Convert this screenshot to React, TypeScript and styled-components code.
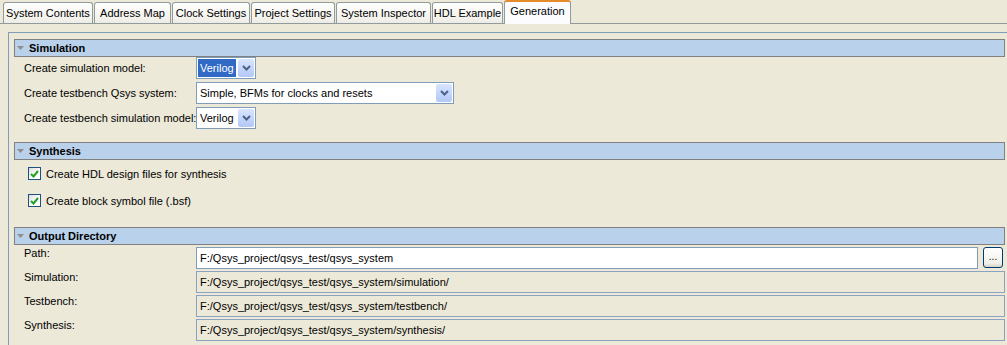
import styled, { createGlobalStyle } from "styled-components";

const GlobalStyle = createGlobalStyle`
  html, body {
    margin: 0;
    padding: 0;
    background: #ECE9D8;
  }
  body {
    font-family: "Liberation Sans", Arial, sans-serif;
    font-size: 11px;
    color: #000;
  }
`;

const Page = styled.div`
  width: 1007px;
  height: 345px;
  overflow: hidden;
  display: flex;
  flex-direction: column;
`;

const TabBar = styled.div`
  display: flex;
  align-items: flex-end;
  gap: 1px;
  height: 25px;
  box-sizing: border-box;
  padding-left: 3px;
  border-bottom: 1px solid #919B9C;
`;

const Tab = styled.div<{ $active?: boolean; $width: number }>`
  box-sizing: border-box;
  width: ${(p) => p.$width}px;
  height: ${(p) => (p.$active ? "24px" : "21px")};
  margin-bottom: ${(p) => (p.$active ? "-1px" : "0")};
  display: flex;
  justify-content: center;
  align-items: ${(p) => (p.$active ? "flex-start" : "center")};
  padding-top: ${(p) => (p.$active ? "3px" : "0")};
  border: 1px solid #919B9C;
  border-bottom: none;
  border-top: ${(p) => (p.$active ? "2px solid #E68B2C" : "1px solid #919B9C")};
  border-radius: 3px 3px 0 0;
  background: ${(p) =>
    p.$active ? "#FCFCFE" : "linear-gradient(#FEFEFE, #F4F3EE 70%, #ECEBE6)"};
  white-space: nowrap;
`;

const Body = styled.div`
  flex: 1;
  padding: 8px 0 0 8px;
  display: flex;
`;

const Panel = styled.div`
  flex: 1;
  border-top: 1px solid #7F9DB9;
  border-left: 1px solid #7F9DB9;
  padding: 6px 2px 0 5px;
  display: flex;
  flex-direction: column;
`;

const Section = styled.section`
  display: flex;
  flex-direction: column;
  margin-bottom: 13px;
`;

const SectionHeader = styled.div`
  height: 18px;
  box-sizing: border-box;
  border: 1px solid #808080;
  background: #B9D1EA;
  display: flex;
  align-items: center;
  gap: 5px;
  padding-left: 2px;
  font-weight: bold;
`;

const Rows = styled.div<{ $gap: number; $top?: number; $indent?: number }>`
  display: flex;
  flex-direction: column;
  gap: ${(p) => p.$gap}px;
  padding-top: ${(p) => p.$top ?? 0}px;
  padding-left: ${(p) => p.$indent ?? 10}px;
`;

const FieldRow = styled.div<{ $top?: boolean }>`
  display: grid;
  grid-template-columns: 172px 1fr;
  align-items: ${(p) => (p.$top ? "start" : "center")};
  height: 22px;
`;

const Label = styled.span`
  line-height: 13px;
  white-space: nowrap;
`;

const SelectBox = styled.div<{ $width: number }>`
  width: ${(p) => p.$width}px;
  height: 22px;
  box-sizing: border-box;
  border: 1px solid #7F9DB9;
  background: #fff;
  display: flex;
  align-items: stretch;
  padding: 1px;
  gap: 2px;
`;

const SelectValue = styled.span<{ $selected?: boolean }>`
  display: flex;
  align-items: center;
  padding: 0 2px;
  background: ${(p) => (p.$selected ? "#316AC5" : "transparent")};
  color: ${(p) => (p.$selected ? "#fff" : "#000")};
  margin-right: auto;
`;

const ArrowButton = styled.span`
  width: 16px;
  border-radius: 2px;
  background: linear-gradient(#D9E5FD, #C1D3FB 60%, #B4C8F6);
  display: flex;
  align-items: center;
  justify-content: center;
`;

const CheckRow = styled.label`
  height: 27px;
  display: flex;
  align-items: center;
  gap: 5px;
`;

const CheckBox = styled.span`
  width: 13px;
  height: 13px;
  box-sizing: border-box;
  border: 1px solid #1C5180;
  background: linear-gradient(135deg, #DCDCD7, #FFFFFF 60%);
  display: flex;
  align-items: center;
  justify-content: center;
`;

const PathLine = styled.div`
  display: flex;
  gap: 5px;
  align-items: flex-start;
`;

const TextField = styled.div<{ $disabled?: boolean }>`
  flex: 1;
  height: 22px;
  box-sizing: border-box;
  border: 1px solid ${(p) => (p.$disabled ? "#8BA3C1" : "#7F9DB9")};
  background: ${(p) => (p.$disabled ? "#ECE9D8" : "#fff")};
  padding-left: 3px;
  display: flex;
  align-items: center;
  white-space: nowrap;
`;

const BrowseButton = styled.button`
  width: 20px;
  height: 21px;
  margin-right: 2px;
  box-sizing: border-box;
  border: 1px solid #003C74;
  border-radius: 3px;
  background: linear-gradient(#FFFFFF, #F0F0EA 80%, #D6D0C5);
  font: inherit;
  font-size: 10px;
  padding: 0 0 3px;
  display: flex;
  align-items: center;
  justify-content: center;
`;

function Collapse() {
  return (
    <svg width="7" height="4" viewBox="0 0 7 4">
      <polygon points="0,0 7,0 3.5,4" fill="#8E8E8E" />
    </svg>
  );
}

function Chevron() {
  return (
    <svg width="9" height="6" viewBox="0 0 9 6">
      <polyline points="1,1 4.5,4.5 8,1" fill="none" stroke="#4D6185" strokeWidth="2" />
    </svg>
  );
}

function Check() {
  return (
    <svg width="9" height="8" viewBox="0 0 9 8">
      <polyline points="1,4 3.5,6.5 8,1" fill="none" stroke="#21A121" strokeWidth="2" />
    </svg>
  );
}

function Select({ width, value, selected }: { width: number; value: string; selected?: boolean }) {
  return (
    <SelectBox $width={width}>
      <SelectValue $selected={selected}>{value}</SelectValue>
      <ArrowButton>
        <Chevron />
      </ArrowButton>
    </SelectBox>
  );
}

const tabs = [
  { label: "System Contents", width: 90 },
  { label: "Address Map", width: 77 },
  { label: "Clock Settings", width: 78 },
  { label: "Project Settings", width: 84 },
  { label: "System Inspector", width: 95 },
  { label: "HDL Example", width: 71 },
  { label: "Generation", width: 67 },
];

const base = "F:/Qsys_project/qsys_test/qsys_system";

export default function App() {
  return (
    <Page>
      <GlobalStyle />
      <TabBar>
        {tabs.map((t) => (
          <Tab key={t.label} $width={t.width} $active={t.label === "Generation"}>
            {t.label}
          </Tab>
        ))}
      </TabBar>
      <Body>
        <Panel>
          <Section>
            <SectionHeader>
              <Collapse />
              Simulation
            </SectionHeader>
            <Rows $gap={3}>
              <FieldRow>
                <Label>Create simulation model:</Label>
                <Select width={60} value="Verilog" selected />
              </FieldRow>
              <FieldRow>
                <Label>Create testbench Qsys system:</Label>
                <Select width={258} value="Simple, BFMs for clocks and resets" />
              </FieldRow>
              <FieldRow>
                <Label>Create testbench simulation model:</Label>
                <Select width={60} value="Verilog" />
              </FieldRow>
            </Rows>
          </Section>
          <Section>
            <SectionHeader>
              <Collapse />
              Synthesis
            </SectionHeader>
            <Rows $gap={0} $indent={14}>
              <CheckRow>
                <CheckBox>
                  <Check />
                </CheckBox>
                Create HDL design files for synthesis
              </CheckRow>
              <CheckRow>
                <CheckBox>
                  <Check />
                </CheckBox>
                Create block symbol file (.bsf)
              </CheckRow>
            </Rows>
          </Section>
          <Section>
            <SectionHeader>
              <Collapse />
              Output Directory
            </SectionHeader>
            <Rows $gap={2} $top={2}>
              <FieldRow $top>
                <Label>Path:</Label>
                <PathLine>
                  <TextField>{base}</TextField>
                  <BrowseButton>...</BrowseButton>
                </PathLine>
              </FieldRow>
              <FieldRow $top>
                <Label>Simulation:</Label>
                <TextField $disabled>{base}/simulation/</TextField>
              </FieldRow>
              <FieldRow $top>
                <Label>Testbench:</Label>
                <TextField $disabled>{base}/testbench/</TextField>
              </FieldRow>
              <FieldRow $top>
                <Label>Synthesis:</Label>
                <TextField $disabled>{base}/synthesis/</TextField>
              </FieldRow>
            </Rows>
          </Section>
        </Panel>
      </Body>
    </Page>
  );
}
